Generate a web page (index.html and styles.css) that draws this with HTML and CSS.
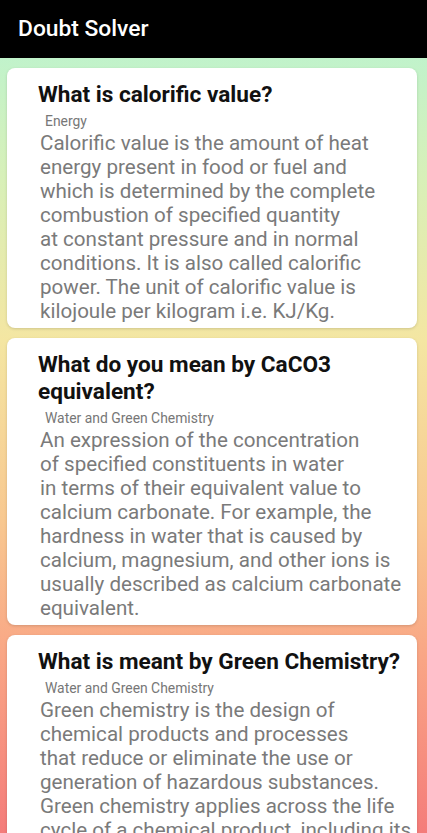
FILE: index.html
```html
<!DOCTYPE html>
<html>
<head>
<meta charset="utf-8">
<link rel="stylesheet" href="styles.css">
</head>
<body>
<header class="appbar">Doubt Solver</header>
<main class="list">
  <article class="card">
    <h2 class="q">What is calorific value?</h2>
    <div class="cat">Energy</div>
    <p class="ans">Calorific value is the amount of heat<br>energy present in food or fuel and<br>which is determined by the complete<br>combustion of specified quantity<br>at constant pressure and in normal<br>conditions. It is also called calorific<br>power. The unit of calorific value is<br>kilojoule per kilogram i.e. KJ/Kg.</p>
  </article>
  <article class="card">
    <h2 class="q">What do you mean by CaCO3<br>equivalent?</h2>
    <div class="cat">Water and Green Chemistry</div>
    <p class="ans">An expression of the concentration<br>of specified constituents in water<br>in terms of their equivalent value to<br>calcium carbonate. For example, the<br>hardness in water that is caused by<br>calcium, magnesium, and other ions is<br>usually described as calcium carbonate<br>equivalent.</p>
  </article>
  <article class="card">
    <h2 class="q">What is meant by Green Chemistry?</h2>
    <div class="cat">Water and Green Chemistry</div>
    <p class="ans">Green chemistry is the design of<br>chemical products and processes<br>that reduce or eliminate the use or<br>generation of hazardous substances.<br>Green chemistry applies across the life<br>cycle of a chemical product, including its<br>design, manufacture, use, and ultimate<br>disposal.</p>
  </article>
</main>
</body>
</html>
```
FILE: styles.css
```css
html, body {
  margin: 0;
  padding: 0;
}
body {
  font-family: Roboto, "Noto Sans", sans-serif;
  height: 833px;
  overflow: hidden;
  background: linear-gradient(to bottom, #b6f4d4 0px, #d8f0b8 180px, #f4e6a2 340px, #f8c890 520px, #f9a585 660px, #f47c7a 833px);
}
.appbar {
  height: 58px;
  background: #000;
  color: #fff;
  font-size: 22.8px;
  font-weight: 500;
  line-height: 58px;
  padding-left: 18px;
}
.list {
  display: flex;
  flex-direction: column;
  gap: 10px;
  padding: 10px 10px 0 7px;
}
.card {
  background: #fff;
  border-radius: 8px;
  box-shadow: 0 1px 3px rgba(0,0,0,0.15);
  padding: 13px 6px 5px 31px;
}
.q {
  margin: 0;
  font-size: 22.6px;
  font-weight: 700;
  line-height: 27px;
  color: #111;
  white-space: nowrap;
}
.cat {
  margin: 5px 0 0 7px;
  font-size: 13.9px;
  line-height: 16px;
  color: #777;
}
.ans {
  margin: 2px 0 0 2px;
  font-size: 20.6px;
  line-height: 24px;
  color: #7a7a7a;
  white-space: nowrap;
}
```
